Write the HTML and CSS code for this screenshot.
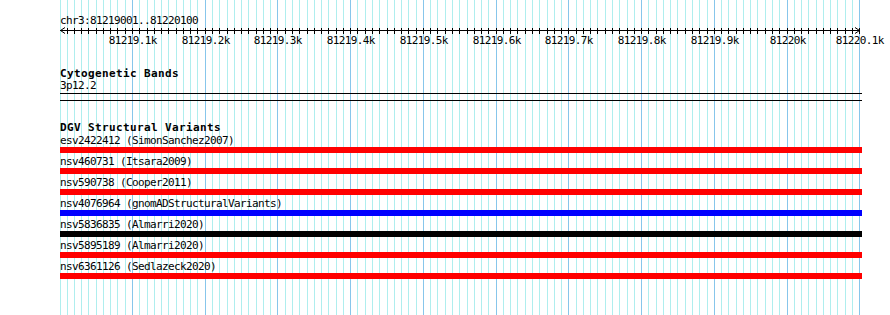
FILE: index.html
```html
<!DOCTYPE html>
<html lang="en">
<head>
  <meta charset="UTF-8">
  <title>chr3:81219001..81220100</title>
  <link rel="stylesheet" href="styles.css">
</head>
<body>
  <div class="figure">
    <svg class="grid-layer" id="gridLayer" width="890" height="315"></svg>

    <div class="tracks">
      <div class="chr-label">chr3:81219001..81220100</div>
      <svg class="ruler" id="ruler" width="830" height="20"></svg>

      <section class="track cyto">
        <h2 class="track-title">Cytogenetic Bands</h2>
        <div class="feature-label">3p12.2</div>
        <div class="band"></div>
      </section>

      <section class="track dgv">
        <h2 class="track-title">DGV Structural Variants</h2>
        <div id="variantList">
          <!-- variant rows are added here -->
        </div>
      </section>
    </div>
  </div>

  <script>
    // region shown
    const START = 81219001;
    const END = 81220100;
    const LEFT = 60;
    const WIDTH = 800;

    const variants = [
      { name: 'esv2422412', source: 'SimonSanchez2007', color: 'red' },
      { name: 'nsv460731', source: 'Itsara2009', color: 'red' },
      { name: 'nsv590738', source: 'Cooper2011', color: 'red' },
      { name: 'nsv4076964', source: 'gnomADStructuralVariants', color: 'blue' },
      { name: 'nsv5836835', source: 'Almarri2020', color: 'black' },
      { name: 'nsv5895189', source: 'Almarri2020', color: 'red' },
      { name: 'nsv6361126', source: 'Sedlazeck2020', color: 'red' },
    ];

    function toX(pos) {
      return LEFT + Math.round((pos - START) * WIDTH / (END - START + 1));
    }

    // grid lines + ruler ticks
    function drawGrid() {
      const grid = document.getElementById('gridLayer');
      const ruler = document.getElementById('ruler');
      let lines = '<rect class="minor" x="' + LEFT + '" y="0" width="1" height="315"/>';
      let ticks = '<rect x="0" y="3" width="800" height="1"/>';
      ticks += '<polyline points="5,0.5 0.5,3.5 5,6.5"/>';
      ticks += '<polyline points="795,0.5 799.5,3.5 795,6.5"/>';

      for (let p = 81219010; p <= END; p += 10) {
        const x = toX(p);
        const major = p % 100 === 0;
        lines += `<rect class="${major ? 'major' : 'minor'}" x="${x}" y="0" width="1" height="315"/>`;
        ticks += `<rect x="${x - LEFT}" y="1" width="1" height="6"/>`;
        if (major) {
          ticks += `<text x="${x - LEFT + 0.8}" y="17">${p / 1000}k</text>`;
        }
      }

      grid.innerHTML = lines;
      ruler.innerHTML = ticks;
    }

    function displayVariants() {
      const list = document.getElementById('variantList');
      list.innerHTML = '';

      variants.forEach(v => {
        const row = document.createElement('div');
        row.className = 'variant';
        row.innerHTML = `
          <div class="feature-label">${v.name} (${v.source})</div>
          <div class="bar bar-${v.color}"></div>
        `;
        list.appendChild(row);
      });
    }

    drawGrid();
    displayVariants();
  </script>
</body>
</html>
```

FILE: styles.css
```css
:root {
  --grid-minor: #afeeee;
  --grid-major: #87c6eb;
  --ink: #000;
}
* {
  box-sizing: border-box;
  margin: 0;
  padding: 0;
}
body {
  background-color: #fff;
  color: var(--ink);
  font-family: "DejaVu Sans Mono", "Liberation Mono", monospace;
  font-size: 11px;
  line-height: 12px;
  letter-spacing: -0.622px;
  overflow: hidden;
}
.figure {
  display: grid;
  width: 890px;
  height: 315px;
}
.grid-layer,
.tracks {
  grid-area: 1 / 1;
}
.grid-layer {
  display: block;
}
.grid-layer .minor {
  fill: var(--grid-minor);
}
.grid-layer .major {
  fill: var(--grid-major);
}
.tracks {
  padding-left: 60px;
  padding-top: 15px;
}
.chr-label {
  height: 12px;
  white-space: nowrap;
}
.ruler {
  display: block;
  overflow: visible;
}
.ruler rect {
  fill: var(--ink);
}
.ruler polyline {
  fill: none;
  stroke: var(--ink);
  stroke-width: 1;
}
.ruler text {
  font-family: "DejaVu Sans Mono", "Liberation Mono", monospace;
  font-size: 11px;
  letter-spacing: -0.622px;
  text-anchor: middle;
  fill: var(--ink);
}
.track-title {
  font-size: 11px;
  font-weight: bold;
  line-height: 12px;
  letter-spacing: 0.378px;
  white-space: nowrap;
}
.feature-label {
  height: 12px;
  white-space: nowrap;
}
.cyto {
  margin-top: 21px;
}
.band {
  width: 802px;
  height: 8px;
  margin-top: 1px;
  border-top: 1px solid var(--ink);
  border-bottom: 1px solid var(--ink);
}
.dgv {
  margin-top: 21px;
}
.dgv .track-title {
  margin-bottom: 1px;
}
.variant {
  margin-bottom: 3px;
}
.bar {
  width: 802px;
  height: 6px;
}
.bar-red {
  background-color: #ff0000;
}
.bar-blue {
  background-color: #0000ff;
}
.bar-black {
  background-color: #000;
}
```
